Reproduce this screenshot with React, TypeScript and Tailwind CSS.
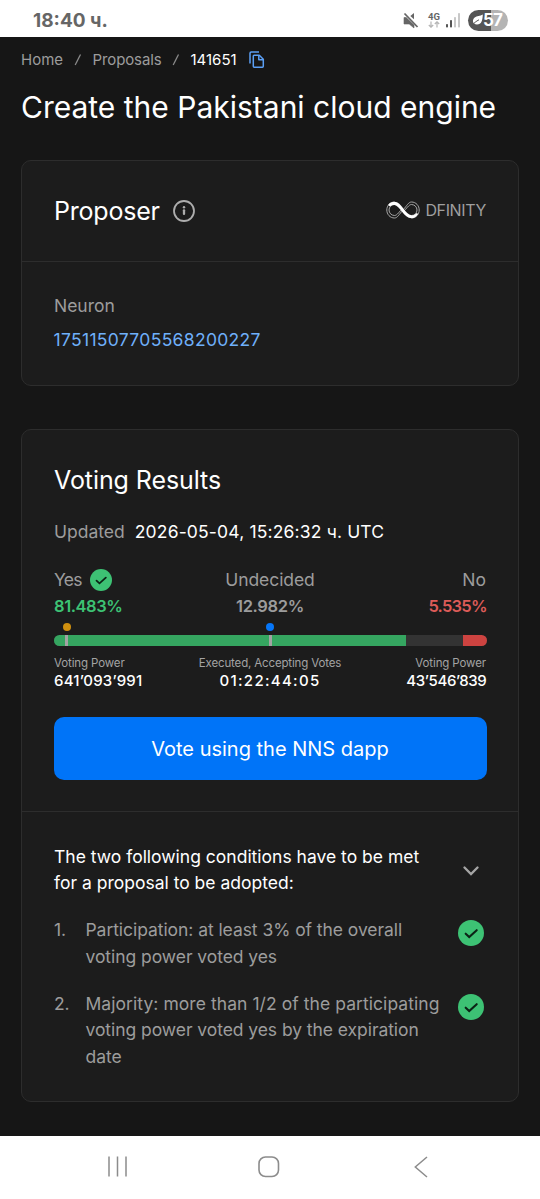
function CheckBadge({ size }: { size: number }) {
  return (
    <svg width={size} height={size} viewBox="0 0 26 26" fill="none" className="shrink-0">
      <circle cx="13" cy="13" r="13" fill="#3dc274" />
      <path d="M7.700 13.700l3.500 3.300 7.500-6.800" stroke="#0b2416" strokeWidth="2.100" strokeLinecap="round" />
    </svg>
  );
}

function StatusBar() {
  return (
    <header className="flex h-[37px] items-center justify-between bg-white pr-[32px] pl-[33px] pt-[3px]">
      <span className="pt-px font-['Inter','Noto_Sans',sans-serif] text-[19px] leading-6 font-bold text-[#666]">18:40 ч.</span>
      <div className="flex items-center">
        <svg width="16" height="17" viewBox="0 0 16 17" className="mr-[8px]">
          <path d="M1 5.500h2.200L11 13v3L6.200 12H1z" fill="#666" stroke="#666" strokeWidth=".6" />
          <path d="M11 1v6.200L7.300 4z" fill="#666" />
          <path d="M1.500 1.500l13 13.500" stroke="#666" strokeWidth="1.800" />
        </svg>
        <div className="flex w-[14px] flex-col items-center">
          <span className="font-['Roboto',sans-serif] text-[9.500px] leading-[9px] font-bold text-[#666]">4G</span>
          <svg width="12" height="7" viewBox="0 0 12 7" fill="none" stroke="#b5b5b5" strokeWidth="1.200">
            <path d="M3 .5v5.700M.8 4L3 6.200 5.200 4M9 6.500V.8M6.800 3L9 .8 11.200 3" />
          </svg>
        </div>
        <svg width="15" height="15" viewBox="0 0 15 15" className="mr-[7px] ml-[5px]">
          <rect x="0" y="11" width="2" height="3.500" rx=".8" fill="#555" />
          <rect x="4" y="7" width="2" height="7.500" rx=".8" fill="#555" />
          <rect x="8" y="4" width="2" height="10.500" rx=".8" fill="#c8c8c8" />
          <rect x="12" y="0" width="2" height="14.500" rx=".8" fill="#c8c8c8" />
        </svg>
        <div className="flex h-[21px] w-[40px] items-center overflow-hidden rounded-full bg-[linear-gradient(90deg,#555_57%,#b4b4b4_57%)] pl-[4px]">
          <svg width="11" height="12" viewBox="0 0 11 12" fill="none">
            <path d="M10.800.6C10.600 6.500 9.500 10.600 5 10.600c-1.200 0-2-.3-2.600-.8C.5 8.500.5 5.400 2.700 3.500 4.800 1.700 8 2.300 10.800.6z" fill="#fff" />
            <path d="M0 11.500C2 9 4 7.300 7 5.800" stroke="#555" strokeWidth="1" />
          </svg>
          <span className="font-['Inter',sans-serif] text-[17px] leading-5 font-bold tracking-[-0.800px] text-white">57</span>
        </div>
      </div>
    </header>
  );
}

function Slash() {
  return (
    <svg width="8" height="14" viewBox="0 0 8 14" className="ml-[10.500px]">
      <path d="M1.200 12L6.500 1.500" stroke="#8a8a8a" strokeWidth="1.300" />
    </svg>
  );
}

function Breadcrumbs() {
  return (
    <nav className="flex items-center text-[15px] leading-[22px] text-[#9c9c9c]">
      <span>Home</span>
      <Slash />
      <span className="ml-[11px] tracking-[-0.120px]">Proposals</span>
      <Slash />
      <span className="ml-[10.500px] text-white">141651</span>
      <svg width="16" height="18" viewBox="0 0 16 18" fill="none" stroke="#5b9ff5" strokeWidth="1.500" strokeLinejoin="round" className="ml-[12px]">
        <path d="M1 12.500V2.200C1 1.500 1.500 1 2.200 1H10" />
        <path d="M5.200 4.200h5.100l4 4v7.100c0 .5-.4.900-.9.900H5.200c-.5 0-.9-.4-.9-.9V5.100c0-.5.4-.9.9-.9z" />
        <path d="M9.800 4.400v4.300h4.300" />
      </svg>
    </nav>
  );
}

function ProposerCard() {
  return (
    <section className="mt-[33px] h-[226px] rounded-[10px] border border-[#2d2d2d] bg-[#1c1c1c]">
      <div className="flex h-[101px] items-center justify-between border-b border-[#2d2d2d] px-[32px]">
        <div className="flex items-center">
          <h2 className="text-[25px] leading-[34px] tracking-[-0.200px] text-white">Proposer</h2>
          <svg width="22" height="22" viewBox="0 0 22 22" fill="none" className="ml-[13px]">
            <circle cx="11" cy="11" r="10" stroke="#adadad" strokeWidth="1.800" />
            <circle cx="11" cy="7.200" r="1.200" fill="#adadad" />
            <path d="M11 10.300v3.600" stroke="#adadad" strokeWidth="2.300" strokeLinecap="round" />
          </svg>
        </div>
        <div className="flex items-center pb-[2px]">
          <svg width="34" height="18" viewBox="0 0 34 18" fill="none">
            <g stroke="#b4b4b4" strokeWidth=".9">
              <path d="M17 9C13 13.500 11.500 17 8.500 17 4 17 .8 13.300.8 9S4 1 8.500 1" />
              <path d="M17 9C21 4.500 22.500 1 25.500 1c4.500 0 7.700 3.700 7.700 8s-3.200 8-7.700 8" />
              <path d="M15.500 8.500C12 12.500 10.500 14.500 8.500 14.500 5.500 14.500 3 12 3 9s2.500-5.500 5.500-5.500" />
              <path d="M18.500 9.500C22 5.500 23.500 3.500 25.500 3.500c3 0 5.500 2.500 5.500 5.500s-2.500 5.500-5.500 5.500" />
            </g>
            <path d="M2 4C3.700 1.700 6 .7 8.500.7c7 0 11 13.300 17 13.500 2.200 0 3.800-.7 5.200-2.300l1.500 1.200c-1.700 2.800-4 4.200-6.700 4.200C18 17.300 13.500 4.200 8.500 3.900c-1.800 0-3.200.3-4.500 1.600z" fill="#fff" />
          </svg>
          <span className="ml-[5px] text-[16px] leading-6 tracking-[-0.360px] text-[#9f9f9f]">DFINITY</span>
        </div>
      </div>
      <div className="px-[32px] pt-[31px] text-[17.500px] leading-[26px]">
        <p className="tracking-[-0.020px] text-[#9c9c9c]">Neuron</p>
        <p className="mt-[8px] ml-[-0.500px] tracking-[0.320px] text-[#6fb0fa]">17511507705568200227</p>
      </div>
    </section>
  );
}

function ResultBar() {
  return (
    <div>
      <div className="relative mt-[4px] h-[8px]">
        <span className="absolute left-[8.500px] size-[8px] rounded-full bg-[#d0900f]" />
        <span className="absolute left-[212px] size-[8px] rounded-full bg-[#0676f8]" />
      </div>
      <div className="relative mx-[-0.500px] mt-[4px] flex h-[11px] overflow-hidden rounded-full bg-[#333]">
        <div className="w-[81.483%] bg-[#35a560]" />
        <div className="w-[12.982%]" />
        <div className="flex-1 bg-[#cd4340]" />
        <span className="absolute left-[11.500px] h-full w-[3px] bg-[#a3a3a3]" />
        <span className="absolute left-[215px] h-full w-[3px] bg-[#a3a3a3]" />
      </div>
    </div>
  );
}

function VotingCard() {
  return (
    <section className="mt-[43px] rounded-[10px] border border-[#2d2d2d] bg-[#1c1c1c]">
      <div className="border-b border-[#2d2d2d] px-[32px] pt-[33px] pb-[31px]">
        <h2 className="text-[25px] leading-[34px] tracking-[-0.080px] text-white">Voting Results</h2>
        <p className="mt-[22px] flex text-[17.500px] leading-[26px] text-[#9c9c9c]">
          Updated<span className="ml-[10px] tracking-[0.160px] text-white">2026-05-04, 15:26:32 ч. UTC</span>
        </p>
        <div className="mt-[22px] grid grid-cols-3 text-[17.500px] leading-[26px] text-[#9c9c9c]">
          <div className="flex items-center">
            <span className="mr-[8px] tracking-[-0.800px]">Yes</span>
            <CheckBadge size={22} />
          </div>
          <div className="text-center tracking-[-0.080px]">Undecided</div>
          <div className="text-right">No</div>
          <div className="text-[16.500px] font-semibold tracking-[-0.430px] text-[#3dc274]">81.483%</div>
          <div className="text-center text-[16.500px] font-semibold tracking-[-0.330px]">12.982%</div>
          <div className="mr-[-0.800px] text-right text-[16.500px] font-semibold tracking-[-0.750px] text-[#dd5b58]">5.535%</div>
        </div>
        <ResultBar />
        <div className="mt-[8px] flex justify-between leading-[18px] whitespace-nowrap text-white">
          <div className="w-[100px]">
            <p className="text-[11.500px] tracking-[-0.120px] text-[#a3a3a3]">Voting Power</p>
            <p className="text-[15px] font-medium tracking-[0.180px]">641’093’991</p>
          </div>
          <div className="text-center">
            <p className="text-[11.500px] tracking-[-0.150px] text-[#a3a3a3]">Executed, Accepting Votes</p>
            <p className="text-[15px] font-medium tracking-[1.300px]">01:22:44:05</p>
          </div>
          <div className="w-[100px] text-right">
            <p className="text-[11.500px] tracking-[-0.120px] text-[#a3a3a3]">Voting Power</p>
            <p className="mr-[-0.400px] text-[15px] font-medium tracking-[-0.370px]">43’546’839</p>
          </div>
        </div>
        <button className="mx-[-0.500px] mt-[27px] flex h-[63px] w-[433px] items-center justify-center rounded-[10px] bg-[#0074f8] text-[20px] leading-[26px] text-white">
          Vote using the NNS dapp
        </button>
      </div>
      <div className="px-[32px] pt-[32px] pb-[30.900px] text-[17.500px] leading-[26.400px]">
        <div className="flex items-center justify-between text-white">
          <p>
            The two following conditions have to be met
            <br />
            for a proposal to be adopted:
          </p>
          <svg width="16" height="10" viewBox="0 0 16 10" fill="none" className="mt-px mr-[7.500px] shrink-0">
            <path d="M1.500 1.500L8 8l6.500-6.500" stroke="#a5a5a5" strokeWidth="2.300" strokeLinecap="round" />
          </svg>
        </div>
        <ol className="tracking-[-0.060px] text-[#9c9c9c]">
          <li className="mt-[20.600px] flex items-start">
            <span className="w-[31.500px] shrink-0">1.</span>
            <p className="flex-1">
              Participation: at least 3% of the overall
              <br />
              voting power voted yes
            </p>
            <span className="mt-[3px] mr-[2.500px]"><CheckBadge size={26} /></span>
          </li>
          <li className="mt-[20.600px] flex items-start">
            <span className="w-[31.500px] shrink-0">2.</span>
            <p className="flex-1 whitespace-nowrap">
              <span className="tracking-[0.060px]">Majority: more than 1/2 of the participating</span>
              <br />
              voting power voted yes by the expiration
              <br />
              date
            </p>
            <span className="mt-[3px] mr-[2.500px]"><CheckBadge size={26} /></span>
          </li>
        </ol>
      </div>
    </section>
  );
}

function NavBar() {
  return (
    <footer className="flex h-[63px] items-center justify-between bg-white pr-[112.500px] pb-[2px] pl-[107px]">
      <svg width="21" height="21" viewBox="0 0 21 21" stroke="#8c8c8c" strokeWidth="1.500">
        <path d="M2 .5v20M10.500.5v20M19 .5v20" />
      </svg>
      <svg width="22" height="22" viewBox="0 0 22 22" fill="none" className="mr-[4px]">
        <rect x="1" y="1" width="19.500" height="19.500" rx="6.500" stroke="#8c8c8c" strokeWidth="1.600" />
      </svg>
      <svg width="14" height="22" viewBox="0 0 14 22" fill="none">
        <path d="M13 1L1.300 11 13 21" stroke="#8c8c8c" strokeWidth="1.500" />
      </svg>
    </footer>
  );
}

export default function App() {
  return (
    <div className="flex h-[1199px] w-[540px] flex-col overflow-hidden bg-[#161616] font-['Inter','Noto_Sans',sans-serif]">
      <StatusBar />
      <main className="flex-1 px-[21px] pt-[12px]">
        <Breadcrumbs />
        <h1 className="mt-[16px] text-[30px] leading-[40px] whitespace-nowrap text-white">Create the Pakistani cloud engine</h1>
        <ProposerCard />
        <VotingCard />
      </main>
      <NavBar />
    </div>
  );
}
